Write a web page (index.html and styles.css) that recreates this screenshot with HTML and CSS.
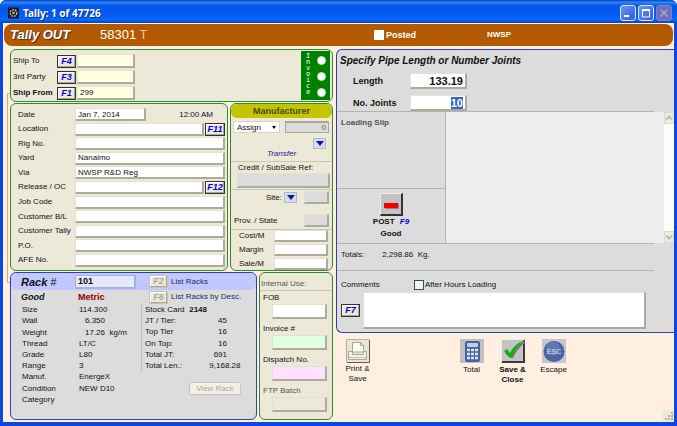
FILE: index.html
```html
<!DOCTYPE html>
<html lang="en">
<head>
    <meta charset="UTF-8">
    <meta name="viewport" content="width=device-width, initial-scale=1.0">
    <title>Tally: 1 of 47726</title>
    <link rel="stylesheet" href="styles.css">
</head>
<body>
    <div class="window">
        <header class="titlebar">
            <svg class="app-icon" viewBox="0 0 12 12">
                <rect width="12" height="12" fill="#1c1c1c"/>
                <circle cx="6" cy="6" r="3.6" fill="none" stroke="#c9c9c9" stroke-width="1.4" stroke-dasharray="2 1"/>
                <circle cx="6" cy="6" r="1.6" fill="#9a9a9a"/>
            </svg>
            <h1>Tally: 1 of 47726</h1>
            <div class="window-buttons">
                <button aria-label="Minimize"><svg viewBox="0 0 14 14"><path d="M3 10h5" stroke="#fff" stroke-width="2"/></svg></button>
                <button aria-label="Maximize"><svg viewBox="0 0 14 14"><path d="M3.5 3v8h7V3" fill="none" stroke="#fff"/><path d="M3 4h8" stroke="#fff" stroke-width="2"/></svg></button>
                <button class="close" aria-label="Close" disabled><svg viewBox="0 0 14 14"><path d="M3.5 3.5l7 7M10.5 3.5l-7 7" stroke="#b9a9c0" stroke-width="1.4"/></svg></button>
            </div>
        </header>

        <div class="client">
            <div class="banner">
                <span class="banner-title">Tally OUT</span>
                <span class="banner-number">58301 <span class="banner-type">T</span></span>
                <label class="banner-posted"><input type="checkbox"> Posted</label>
                <span class="banner-company">NWSP</span>
            </div>

            <main class="columns">
                <div class="left">
                    <section class="panel ship">
                        <div class="ship-rows">
                            <div class="ship-row"><label for="shipTo">Ship To</label><button class="fkey">F4</button><input id="shipTo" type="text"></div>
                            <div class="ship-row"><label for="thirdParty">3rd Party</label><button class="fkey">F3</button><input id="thirdParty" type="text"></div>
                            <div class="ship-row"><label for="shipFrom"><b>Ship From</b></label><button class="fkey">F1</button><input id="shipFrom" type="text" value="299"></div>
                        </div>
                        <div class="invoice">
                            <span class="invoice-label">Invoice</span>
                            <div class="invoice-options">
                                <input type="radio" name="invoice" aria-label="Invoice ship to">
                                <input type="radio" name="invoice" aria-label="Invoice third party">
                                <input type="radio" name="invoice" aria-label="Invoice ship from">
                            </div>
                        </div>
                    </section>

                    <div class="middle">
                        <section class="panel details">
                            <div class="row"><label for="date">Date</label><input class="date" id="date" type="text" value="Jan 7, 2014"><span class="time">12:00 AM</span></div>
                            <div class="row"><label for="location">Location</label><input id="location" type="text"><button class="fkey">F11</button></div>
                            <div class="row"><label for="rig">Rig No.</label><input id="rig" type="text"></div>
                            <div class="row"><label for="yard">Yard</label><input id="yard" type="text" value="Nanaimo"></div>
                            <div class="row"><label for="via">Via</label><input id="via" type="text" value="NWSP R&amp;D Reg"></div>
                            <div class="row"><label for="release">Release / OC</label><input id="release" type="text"><button class="fkey">F12</button></div>
                            <div class="row"><label for="job">Job Code</label><input id="job" type="text"></div>
                            <div class="row"><label for="custBl">Customer B/L</label><input id="custBl" type="text"></div>
                            <div class="row"><label for="custTally">Customer Tally</label><input id="custTally" type="text"></div>
                            <div class="row"><label for="po">P.O.</label><input id="po" type="text"></div>
                            <div class="row"><label for="afe">AFE No.</label><input id="afe" type="text"></div>
                        </section>

                        <section class="panel maker">
                            <h2>Manufacturer</h2>
                            <div class="assign">
                                <div class="select-wrap">
                                    <select aria-label="Assign"><option>Assign</option></select>
                                    <svg viewBox="0 0 6 4"><path d="M1 0h4L3 3z" fill="#000"/></svg>
                                </div>
                                <input class="flat" type="text" value="0" aria-label="Manufacturer number" readonly>
                            </div>
                            <div class="transfer">
                                <button class="drop" aria-label="Choose transfer"><svg viewBox="0 0 8 5"><path d="M0 0h8L4 5z"/></svg></button>
                                <i>Transfer</i>
                            </div>
                            <div class="credit">
                                <label for="credit">Credit / SubSale Ref:</label>
                                <input class="gray" id="credit" type="text">
                            </div>
                            <div class="places">
                                <div class="place"><label for="site">Site:</label><button class="drop" aria-label="Choose site"><svg viewBox="0 0 8 5"><path d="M0 0h8L4 5z"/></svg></button><input class="gray" id="site" type="text"></div>
                                <div class="place"><label for="prov">Prov. / State</label><input class="gray" id="prov" type="text"></div>
                            </div>
                            <div class="costs">
                                <div class="cost"><label for="cost">Cost/M</label><input id="cost" type="text"></div>
                                <div class="cost"><label for="margin">Margin</label><input id="margin" type="text"></div>
                                <div class="cost"><label for="sale">Sale/M</label><input id="sale" type="text"></div>
                            </div>
                        </section>
                    </div>

                    <div class="bottom">
                        <section class="panel rack">
                            <div class="rack-head">
                                <label for="rackNo"><b>Rack</b> #</label>
                                <input id="rackNo" type="text" value="101">
                                <button class="fkey off" disabled>F2</button>
                                <a href="#racks">List Racks</a>
                            </div>
                            <div class="rack-sub">
                                <b class="quality">Good</b>
                                <b class="units">Metric</b>
                                <button class="fkey off" disabled>F6</button>
                                <a href="#racks-desc">List Racks by Desc.</a>
                            </div>
                            <div class="rack-body">
                                <table class="specs">
                                    <tr><th>Size</th><td>114.300</td></tr>
                                    <tr><th>Wall</th><td class="in">6.350</td></tr>
                                    <tr><th>Weight</th><td class="in">17.26&nbsp; kg/m</td></tr>
                                    <tr><th>Thread</th><td>LT/C</td></tr>
                                    <tr><th>Grade</th><td>L80</td></tr>
                                    <tr><th>Range</th><td>3</td></tr>
                                    <tr><th>Manuf.</th><td>EnergeX</td></tr>
                                    <tr><th>Condition</th><td>NEW D10</td></tr>
                                    <tr><th>Category</th><td></td></tr>
                                </table>
                                <div class="stock">
                                    <table class="counts">
                                        <tr><th>Stock Card</th><td class="card">2148</td></tr>
                                        <tr><th>JT / Tier:</th><td>45</td></tr>
                                        <tr><th>Top Tier</th><td>16</td></tr>
                                        <tr><th>On Top:</th><td>16</td></tr>
                                        <tr><th>Total JT:</th><td>691</td></tr>
                                        <tr><th>Total Len.:</th><td class="long">9,168.28</td></tr>
                                    </table>
                                    <button class="view-rack" disabled>View Rack</button>
                                </div>
                            </div>
                        </section>

                        <section class="panel internal">
                            <h2>Internal Use:</h2>
                            <label for="fob">FOB</label>
                            <input id="fob" type="text">
                            <label for="invoiceNo">Invoice #</label>
                            <input class="green" id="invoiceNo" type="text">
                            <label for="dispatch">Dispatch No.</label>
                            <input class="pink" id="dispatch" type="text">
                            <label class="dim" for="ftp">FTP Batch</label>
                            <input class="beige" id="ftp" type="text">
                        </section>
                    </div>
                </div>

                <div class="right">
                    <section class="pipe">
                        <div class="pipe-head">
                            <h2>Specify Pipe Length or Number Joints</h2>
                            <div class="pipe-row"><label for="length">Length</label><input id="length" type="text" value="133.19"></div>
                            <div class="pipe-row"><label for="joints">No. Joints</label><input id="joints" type="text" value="10"></div>
                        </div>
                        <div class="loading">
                            <div class="loading-side">
                                <h3>Loading Slip</h3>
                                <div class="post">
                                    <button class="post-button" aria-label="Post"><svg viewBox="0 0 20 20"><path d="M4 10h14v5H4z" fill="#888"/><path d="M3 9h14v5H3z" fill="#f00000"/></svg></button>
                                    <div>POST <i>F9</i></div>
                                    <div>Good</div>
                                </div>
                            </div>
                            <div class="slips"></div>
                            <div class="scrollbar">
                                <button aria-label="Scroll up"><svg viewBox="0 0 8 8"><path d="M1 5.500l3-3 3 3" /></svg></button>
                                <button aria-label="Scroll down"><svg viewBox="0 0 8 8"><path d="M1 2.500l3 3 3-3" /></svg></button>
                            </div>
                        </div>
                        <div class="totals"><span>Totals:</span><span>2,298.86&nbsp; Kg.</span></div>
                        <div class="comments">
                            <label for="comments">Comments</label>
                            <label class="after"><input type="checkbox"> After Hours Loading</label>
                            <button class="fkey">F7</button>
                            <textarea id="comments"></textarea>
                        </div>
                    </section>

                    <div class="actions">
                        <button class="action print">
                            <svg viewBox="0 0 24 24">
                                <rect width="24" height="24" fill="#e9e6d8"/>
                                <path d="M.5 23V.5H23" fill="none" stroke="#b5b2a5"/>
                                <path d="M23.500 1v22.500H1" fill="none" stroke="#5e5c55"/>
                                <path d="M6.500 13V3.500h8l3 3V13z" fill="#fbfaf3" stroke="#aaa797"/>
                                <path d="M14.500 3.500v3h3" fill="none" stroke="#aaa797"/>
                                <path d="M2.500 12.500h4v3h11v-3h3v8h-18z" fill="#f4f2e8" stroke="#aaa797"/>
                                <path d="M3 18.500h17" stroke="#c4c1b2"/>
                            </svg>
                            <span>Print &amp;<br>Save</span>
                        </button>
                        <button class="action total">
                            <svg viewBox="0 0 24 24">
                                <rect width="24" height="24" fill="#c0c0c8"/>
                                <rect x="5" y="2" width="15" height="21" rx="2" fill="#46639f"/>
                                <rect x="7" y="4" width="11" height="4" rx="1" fill="#c7cede"/>
                                <path d="M7 11h3m1 0h3m1 0h3M7 15h3m1 0h3m1 0h3M7 19h3m1 0h3m1 0h3" stroke="#dde2ee" stroke-width="2.600"/>
                            </svg>
                            <span>Total</span>
                        </button>
                        <button class="action save">
                            <svg viewBox="0 0 24 24">
                                <rect width="24" height="24" fill="#c3c3c3"/>
                                <path d="M.5 23V.5H23" fill="none" stroke="#eee"/>
                                <path d="M23 1v22H1" fill="none" stroke="#3c3c3c" stroke-width="2"/>
                                <path d="M4 14l3-2 3 4C13 10 17 5 24 2v2c-6 4-9 9-12 15H9z" fill="#777"/>
                                <path d="M3 12l3-2 3 4C12 8 16 4 24 1c-6 4-10 9-13 17H8z" fill="#10b010"/>
                            </svg>
                            <b>Save &amp;<br>Close</b>
                        </button>
                        <button class="action escape">
                            <svg viewBox="0 0 24 24">
                                <rect width="24" height="24" fill="#c3c5cf"/>
                                <circle cx="12" cy="12.500" r="10.500" fill="#4c64a0"/>
                                <circle cx="11" cy="10" r="7" fill="#6078b0"/>
                                <text x="12" y="15" text-anchor="middle">ESC</text>
                            </svg>
                            <span>Escape</span>
                        </button>
                    </div>
                    <svg class="grip" viewBox="0 0 12 12">
                        <path d="M9 3h2M6 6h2M9 6h2M3 9h2M6 9h2M9 9h2" stroke="#b8b4a2" stroke-width="2"/>
                    </svg>
                </div>
            </main>
        </div>
    </div>

    <script>
        // number of joints is the field to fill in first
        document.getElementById('joints').select();
    </script>
</body>
</html>
```
FILE: styles.css
```css
* {
    box-sizing: border-box;
}
body {
    margin: 0;
    font-family: "Liberation Sans", Arial, sans-serif;
    font-size: 8px;
    line-height: 10px;
    color: #111;
    background-color: #fff;
}
h1, h2, h3 {
    margin: 0;
}
button, input, select, textarea {
    font-family: inherit;
    font-size: 8px;
    margin: 0;
    padding: 0;
    color: #111;
    border-radius: 0;
    outline: none;
}
input[type="text"] {
    min-width: 0;
    height: 13px;
    padding: 0 2px;
    background-color: #fff;
    border: 1px solid #e4e1d2;
    border-right: 2px solid #aeab9d;
    border-bottom: 2px solid #aeab9d;
}
label {
    white-space: nowrap;
}
.window {
    display: flex;
    flex-direction: column;
    min-height: 100vh;
    padding: 0 3px 4px;
    background-color: #0a48e0;
    border-radius: 6px 6px 0 0;
}

/* title bar */
.titlebar {
    display: flex;
    align-items: center;
    gap: 4px;
    height: 23px;
    margin: 0 -3px;
    padding: 2px 5px 0 8px;
    color: #fff;
    border-radius: 6px 6px 0 0;
    background: linear-gradient(#0a3fc0, #2a86fb 10%, #0357e8 25%, #0458ee 60%, #0668fc 85%, #0342c4);
}
.app-icon {
    width: 11px;
    height: 12px;
}
.titlebar h1 {
    flex: 1;
    font-family: "Noto Sans", sans-serif;
    font-size: 10px;
    line-height: 14px;
    text-shadow: 1px 1px #0a2f90;
}
.window-buttons {
    display: flex;
    gap: 2px;
}
.window-buttons button {
    width: 16px;
    height: 16px;
    border: 1px solid #dfe8ff;
    border-radius: 3px;
    background: linear-gradient(135deg, #6d94f5, #2a5ce0);
}
.window-buttons svg {
    display: block;
    width: 14px;
    height: 14px;
}
.window-buttons .close {
    border-color: #7f84cc;
    background: #6a70bd;
}

.client {
    display: flex;
    flex-direction: column;
    flex: 1;
    background-color: #ffefe0;
}
.banner {
    display: grid;
    grid-template-columns: 90px 1fr 113px 186px;
    align-items: center;
    height: 22px;
    margin: 1px 1px 0;
    padding-left: 6px;
    color: #fff;
    font-weight: bold;
    background-color: #b35a00;
    border-radius: 8px;
}
.banner-title {
    font-size: 13px;
    font-style: italic;
    text-shadow: 1px 1px 1px #333;
}
.banner-number {
    font-size: 13px;
    font-weight: normal;
}
.banner-type {
    color: #ffb8b0;
}
.banner-posted {
    display: flex;
    align-items: center;
    gap: 2px;
    font-size: 9px;
}
.banner-posted input {
    width: 10px;
    height: 10px;
    appearance: none;
    background-color: #fff;
}

/* panels */
.columns {
    display: grid;
    grid-template-columns: 323px 1fr;
    gap: 3px;
    flex: 1;
    padding: 3px 0 2px 7px;
}
.left {
    display: flex;
    flex-direction: column;
    gap: 1px;
    position: relative;
}
.left::before {
    content: "";
    position: absolute;
    top: 44px;
    left: -3px;
    width: 4px;
    height: 188px;
    border: 1px solid #d9a878;
    border-right: none;
}
.panel {
    position: relative;
    background-color: #ece9d8;
    border: 1px solid #2f8a2f;
    border-radius: 6px;
}
.ship {
    display: flex;
    justify-content: space-between;
    height: 53px;
    padding: 1px 2px 1px 2px;
}
.ship-rows {
    display: flex;
    flex-direction: column;
    gap: 2px;
    padding-top: 3px;
}
.ship-row {
    display: grid;
    grid-template-columns: 43px 19px 58px;
    gap: 1px;
    align-items: center;
}
.ship-row input[type="text"] {
    height: 14px;
    background-color: #ffffe1;
}
.fkey {
    width: 19px;
    height: 13px;
    font-size: 9px;
    line-height: 9px;
    font-weight: bold;
    font-style: italic;
    color: #0000f0;
    background-color: #ece9d8;
    border: 1px solid #333;
    box-shadow: inset -1px -1px #aaa797, inset 1px 1px #fff;
}
.fkey.off {
    color: #aca899;
    border-color: #c8c4b4;
}
.invoice {
    display: flex;
    gap: 6px;
    width: 29px;
    padding: 2px 4px 0;
    background-color: #008000;
}
.invoice-label {
    width: 6px;
    font-family: "DejaVu Sans Mono", monospace;
    font-size: 7px;
    line-height: 6px;
    color: #fff;
    text-align: center;
    word-break: break-all;
}
.invoice-options {
    display: flex;
    flex-direction: column;
    justify-content: space-around;
}
.invoice-options input {
    width: 9px;
    height: 9px;
    appearance: none;
    background-color: #fff;
    border: 1px solid #c8d8c8;
    border-radius: 50%;
}
.middle {
    display: grid;
    grid-template-columns: 1fr 103px;
    gap: 2px;
    min-height: 168px;
}
.details {
    display: flex;
    flex-direction: column;
    justify-content: space-between;
    padding: 4px 2px 3px 7px;
}
.row {
    display: flex;
    align-items: center;
}
.row label {
    width: 57px;
}
.row input {
    flex: 1;
}
.row .date {
    flex: none;
    width: 71px;
}
.row .fkey {
    width: 20px;
    margin-left: 1px;
}
.time {
    flex: 1;
    padding-right: 12px;
    text-align: right;
}

/* manufacturer */
.maker h2 {
    font-size: 9px;
    line-height: 14px;
    color: #4a4a20;
    text-align: center;
    background-color: #c4c400;
    border-radius: 6px;
}
.assign {
    display: flex;
    justify-content: space-between;
    padding: 3px 3px 0 2px;
}
.select-wrap {
    position: relative;
    width: 47px;
}
.select-wrap select {
    width: 100%;
    height: 12px;
    padding: 0 3px;
    appearance: none;
    background-color: #fff;
    border: 1px solid #d8d5c8;
}
.select-wrap svg {
    position: absolute;
    top: 5px;
    right: 3px;
    width: 6px;
    height: 4px;
}
.assign .flat {
    width: 44px;
    height: 12px;
    text-align: right;
    color: #666;
    background-color: #dcdcdc;
    border: 1px solid #aaa797;
    border-top: 2px solid #aaa797;
}
.transfer {
    display: flex;
    flex-direction: column;
    align-items: center;
    padding: 5px 0 2px;
    color: #202890;
}
.drop {
    width: 13px;
    height: 11px;
    background-color: #d4dcf4;
    border: 1px solid #b0b8d0;
}
.drop svg {
    display: block;
    width: 8px;
    height: 5px;
    margin: auto;
    fill: #101890;
}
.transfer .drop {
    align-self: flex-end;
    margin-right: 6px;
}
.credit {
    display: flex;
    flex-direction: column;
    padding: 1px 2px 1px 6px;
    border-top: 1px solid #c8c5b6;
}
.credit label {
    padding-left: 1px;
}
.credit input[type="text"] {
    height: 15px;
}
input[type="text"].gray {
    background-color: #dcdcdc;
}
.places {
    display: flex;
    flex-direction: column;
    gap: 10px;
    padding: 1px 3px 2px;
    border-top: 1px solid #c8c5b6;
}
.place {
    display: flex;
    align-items: center;
}
.place label {
    flex: 1;
}
.place:first-child label {
    text-align: right;
}
.place .drop {
    margin: 0 7px 0 2px;
}
.place input[type="text"] {
    width: 25px;
}
.costs {
    display: flex;
    flex-direction: column;
    gap: 2px;
    padding: 0 4px 0 8px;
    border-top: 1px solid #c8c5b6;
}
.cost {
    display: flex;
    align-items: center;
}
.cost label {
    width: 35px;
}
.cost input[type="text"] {
    flex: 1;
    height: 12px;
}

/* rack */
.bottom {
    display: grid;
    grid-template-columns: 1fr 74px;
    gap: 2px;
    flex: 1;
}
.rack {
    background-color: #dcdcdc;
    border-color: #3040b0;
}
.rack-head, .rack-sub {
    display: grid;
    grid-template-columns: 54px 61px 19px 1fr;
    align-items: center;
    padding-left: 10px;
}
.rack-head {
    height: 17px;
    background-color: #c0c8ff;
    border-radius: 6px;
}
.rack-head label {
    font-size: 11px;
    font-style: italic;
}
.rack-head input[type="text"] {
    height: 14px;
    font-size: 9px;
    font-weight: bold;
    background-color: #e4e8ff;
    border-color: #a8b0e0;
}
.rack .fkey {
    margin-left: 13px;
}
.rack-head a, .rack-sub a {
    padding-left: 16px;
    color: #202870;
    text-decoration: none;
    white-space: nowrap;
}
.rack-sub {
    height: 14px;
    font-size: 9px;
}
.rack-sub a {
    font-size: 8px;
}
.quality {
    font-style: italic;
}
.units {
    padding-left: 3px;
    color: #900000;
}
.rack-body {
    display: grid;
    grid-template-columns: 119px 1fr;
    padding-left: 11px;
}
table {
    border-collapse: collapse;
}
th, td {
    height: 11px;
    padding: 0;
    line-height: 11px;
    font-weight: normal;
    text-align: left;
    white-space: nowrap;
}
.specs {
    height: 101px;
}
.specs th {
    width: 57px;
}
.specs .in {
    padding-left: 6px;
}
.stock {
    display: flex;
    flex-direction: column;
    align-items: flex-start;
}
.counts {
    width: 100px;
    height: 67px;
    border-left: 1px solid #bbb;
}
.counts th {
    padding-left: 3px;
}
.counts td {
    padding-right: 13px;
    text-align: right;
}
.counts .card {
    padding-right: 33px;
    font-weight: bold;
}
.counts .long {
    padding-right: 0;
}
.view-rack {
    width: 52px;
    height: 13px;
    margin: 11px 0 0 48px;
    line-height: 10px;
    color: #aca899;
    background-color: #f2f0e6;
    border: 1px solid #c9c7ba;
    border-radius: 2px;
}

/* internal use */
.internal {
    display: flex;
    flex-direction: column;
    padding: 6px 0 0;
}
.internal h2 {
    padding: 0 1px 1px;
    font-size: 8px;
    font-weight: normal;
    color: #555;
    border-bottom: 1px solid #c8c5b6;
}
.internal label {
    padding: 2px 3px 1px;
    line-height: 10px;
}
.internal label + input[type="text"] {
    height: 15px;
    margin: 0 5px 3px 12px;
}
.internal input.green {
    background-color: #e0ffe0;
}
.internal input.pink {
    background-color: #ffe0ff;
}
.internal input.beige {
    background-color: #ece9d8;
}
.internal .dim {
    color: #555;
}

/* pipe */
.right {
    display: flex;
    flex-direction: column;
    position: relative;
}
.pipe {
    background-color: #dcdcdc;
    border: 1px solid #3040b0;
    border-right: none;
    border-radius: 6px 0 0 6px;
}
.pipe-head {
    display: flex;
    flex-direction: column;
    gap: 6px;
    margin-right: 20px;
    padding: 5px 0 0 3px;
    border-bottom: 1px solid #b8b5a6;
}
.pipe-head h2 {
    font-size: 10px;
    line-height: 12px;
    font-style: italic;
}
.pipe-row {
    display: flex;
    align-items: center;
    padding-left: 13px;
    font-size: 9px;
    font-weight: bold;
}
.pipe-row label {
    width: 57px;
}
.pipe-row input[type="text"] {
    width: 57px;
    height: 16px;
    font-size: 11px;
    font-weight: bold;
    text-align: right;
}
#joints::selection {
    color: #fff;
    background-color: #316ac5;
}
.loading {
    display: grid;
    grid-template-columns: 109px 1fr 10px;
    height: 131px;
}
.loading-side {
    display: flex;
    flex-direction: column;
    justify-content: space-between;
    border-right: 1px solid #b8b5a6;
}
.loading-side h3 {
    padding: 5px 4px;
    font-size: 8px;
    line-height: 12px;
    color: #555;
}
.post {
    height: 55px;
    padding-top: 4px;
    font-weight: bold;
    line-height: 12px;
    text-align: center;
    border-top: 1px solid #b8b5a6;
}
.post i {
    margin-left: 3px;
    color: #0000f0;
}
.post-button {
    display: block;
    width: 23px;
    height: 23px;
    margin: 0 auto;
    background-color: #c3c3c3;
    border: 1px solid #eee;
    border-right: 2px solid #333;
    border-bottom: 2px solid #333;
}
.post-button svg {
    display: block;
    width: 20px;
    height: 20px;
}
.slips {
    background-color: #eee;
}
.scrollbar {
    display: flex;
    flex-direction: column;
    justify-content: space-between;
    background-color: #fdfdfa;
}
.scrollbar button {
    width: 10px;
    height: 12px;
    background-color: #eeede5;
    border: 1px solid #dddacb;
}
.scrollbar svg {
    display: block;
    width: 8px;
    height: 8px;
    fill: none;
    stroke: #c0bdad;
    stroke-width: 2;
}
.totals {
    display: flex;
    gap: 18px;
    height: 28px;
    margin-right: 20px;
    padding: 6px 4px;
    border-top: 1px solid #b8b5a6;
    border-bottom: 1px solid #b8b5a6;
}
.comments {
    display: grid;
    grid-template-columns: 19px 47px 1fr;
    column-gap: 3px;
    row-gap: 2px;
    align-items: center;
    padding: 9px 28px 3px 4px;
}
.comments > label:first-child {
    grid-column: span 2;
}
.after {
    display: flex;
    align-items: center;
    gap: 1px;
    padding-left: 1px;
}
.after input {
    width: 10px;
    height: 10px;
    appearance: none;
    background-color: #f4f4f0;
    border: 1px solid #1c5180;
}
.comments textarea {
    grid-column: span 2;
    width: 100%;
    height: 37px;
    padding: 2px;
    resize: none;
    background-color: #fff;
    border: 1px solid #e4e1d2;
    border-right: 2px solid #aeab9d;
    border-bottom: 2px solid #aeab9d;
}

/* action buttons */
.actions {
    display: flex;
    align-items: flex-start;
    padding-top: 6px;
}
.action {
    display: flex;
    flex-direction: column;
    align-items: center;
    gap: 1px;
    width: 41px;
    line-height: 10px;
    background: none;
    border: none;
}
.action svg {
    width: 24px;
    height: 24px;
}
.action text {
    font-size: 7px;
    fill: #e4e8f4;
}
.print {
    margin: 0 73px 0 1px;
}
.total span, .save b, .escape span {
    padding-top: 1px;
}
.grip {
    position: absolute;
    right: 0;
    bottom: -2px;
    width: 12px;
    height: 12px;
    background-color: #ece9d8;
}
```
